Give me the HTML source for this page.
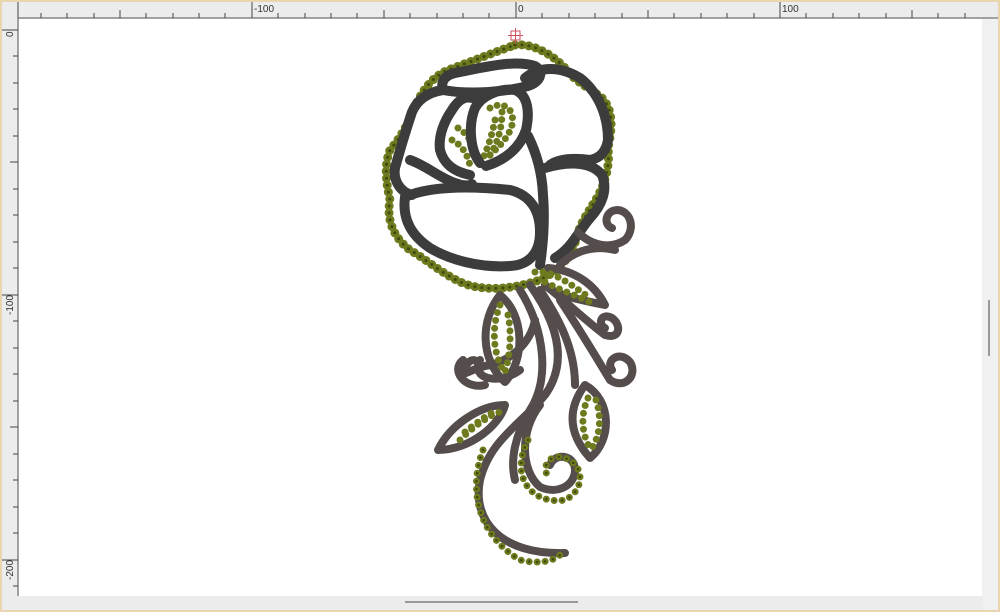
<!DOCTYPE html>
<html><head><meta charset="utf-8"><style>
html,body{margin:0;padding:0;width:1000px;height:612px;overflow:hidden;background:#f3e3c3}
svg{display:block}
</style></head><body>
<svg width="1000" height="612" viewBox="0 0 1000 612" xmlns="http://www.w3.org/2000/svg" font-family="Liberation Sans, sans-serif">
<rect x="0" y="0" width="1000" height="612" fill="#e9d6ae"/>
<rect x="2" y="2" width="996" height="608" fill="#f0f0f0"/>
<rect x="19" y="19" width="963" height="577" fill="#fff"/>
<rect x="2" y="2" width="996" height="16" fill="#ececec"/>
<line x1="2" y1="18" x2="998" y2="18" stroke="#555"/>
<rect x="2" y="2" width="16" height="608" fill="#ececec"/>
<line x1="18" y1="18" x2="18" y2="596" stroke="#555"/>
<g stroke="#444" stroke-width="1">
<line x1="18" y1="2" x2="18" y2="18"/>
<line x1="252" y1="2" x2="252" y2="18"/><line x1="516" y1="2" x2="516" y2="18"/><line x1="780" y1="2" x2="780" y2="18"/>
<line x1="41" y1="13" x2="41" y2="18"/><line x1="67" y1="13" x2="67" y2="18"/><line x1="94" y1="13" x2="94" y2="18"/><line x1="120" y1="10" x2="120" y2="18"/><line x1="146" y1="13" x2="146" y2="18"/><line x1="173" y1="13" x2="173" y2="18"/><line x1="199" y1="13" x2="199" y2="18"/><line x1="225" y1="13" x2="225" y2="18"/>
<line x1="278" y1="13" x2="278" y2="18"/><line x1="305" y1="13" x2="305" y2="18"/><line x1="331" y1="13" x2="331" y2="18"/><line x1="357" y1="13" x2="357" y2="18"/><line x1="384" y1="10" x2="384" y2="18"/><line x1="410" y1="13" x2="410" y2="18"/><line x1="437" y1="13" x2="437" y2="18"/><line x1="463" y1="13" x2="463" y2="18"/><line x1="489" y1="13" x2="489" y2="18"/>
<line x1="542" y1="13" x2="542" y2="18"/><line x1="569" y1="13" x2="569" y2="18"/><line x1="595" y1="13" x2="595" y2="18"/><line x1="622" y1="13" x2="622" y2="18"/><line x1="648" y1="10" x2="648" y2="18"/><line x1="674" y1="13" x2="674" y2="18"/><line x1="701" y1="13" x2="701" y2="18"/><line x1="727" y1="13" x2="727" y2="18"/><line x1="754" y1="13" x2="754" y2="18"/>
<line x1="806" y1="13" x2="806" y2="18"/><line x1="833" y1="13" x2="833" y2="18"/><line x1="859" y1="13" x2="859" y2="18"/><line x1="886" y1="13" x2="886" y2="18"/><line x1="912" y1="10" x2="912" y2="18"/><line x1="938" y1="13" x2="938" y2="18"/><line x1="965" y1="13" x2="965" y2="18"/>
<line x1="2" y1="30" x2="18" y2="30"/><line x1="2" y1="295" x2="18" y2="295"/><line x1="2" y1="560" x2="18" y2="560"/>
<line x1="13" y1="56" x2="18" y2="56"/><line x1="13" y1="83" x2="18" y2="83"/><line x1="13" y1="109" x2="18" y2="109"/><line x1="13" y1="136" x2="18" y2="136"/><line x1="10" y1="162" x2="18" y2="162"/><line x1="13" y1="189" x2="18" y2="189"/><line x1="13" y1="215" x2="18" y2="215"/><line x1="13" y1="242" x2="18" y2="242"/><line x1="13" y1="268" x2="18" y2="268"/>
<line x1="13" y1="321" x2="18" y2="321"/><line x1="13" y1="348" x2="18" y2="348"/><line x1="13" y1="374" x2="18" y2="374"/><line x1="13" y1="401" x2="18" y2="401"/><line x1="10" y1="427" x2="18" y2="427"/><line x1="13" y1="454" x2="18" y2="454"/><line x1="13" y1="480" x2="18" y2="480"/><line x1="13" y1="507" x2="18" y2="507"/><line x1="13" y1="533" x2="18" y2="533"/><line x1="13" y1="586" x2="18" y2="586"/>
</g>
<g font-size="10" fill="#333">
<text x="254" y="12">-100</text><text x="518" y="12">0</text><text x="782" y="12">100</text>
<text transform="translate(13,37) rotate(-90)">0</text>
<text transform="translate(13,315) rotate(-90)">-100</text>
<text transform="translate(13,580) rotate(-90)">-200</text>
</g>
<rect x="983" y="19" width="15" height="577" fill="#f0f0f0"/>
<line x1="989" y1="300" x2="989" y2="356" stroke="#999" stroke-width="2"/>
<rect x="2" y="596" width="981" height="14" fill="#ececec"/>
<line x1="405" y1="602" x2="578" y2="602" stroke="#999" stroke-width="2"/>
<g fill="none" stroke-linecap="round" stroke-linejoin="round">
<!-- green sequin outline of rose -->
<g id="ol">
<path d="M515 45 C530 43 550 52 565 68 C575 82 590 88 602 98 C614 110 612 130 608 148 C610 165 606 180 598 196 C590 210 580 222 576 240 C570 258 560 270 540 280 C515 288 490 292 465 284 C445 276 430 262 410 250 C394 238 386 220 390 200 C386 182 384 165 390 150 C400 138 408 125 414 108 C422 92 430 78 448 70 C470 62 495 52 515 45 Z" stroke="#6f7a1e" stroke-width="9" stroke-dasharray="0 7"/>
</g>
<path d="M515 45 C530 43 550 52 565 68 C575 82 590 88 602 98 C614 110 612 130 608 148 C610 165 606 180 598 196 C590 210 580 222 576 240 C570 258 560 270 540 280 C515 288 490 292 465 284 C445 276 430 262 410 250 C394 238 386 220 390 200 C386 182 384 165 390 150 C400 138 408 125 414 108 C422 92 430 78 448 70 C470 62 495 52 515 45 Z" stroke="#3b4a10" stroke-width="3" stroke-dasharray="0 7"/>
<!-- inner sequin fills -->
<g stroke="#6f7a1e" stroke-width="7" stroke-dasharray="0 7.5">
<path d="M490 108 C505 100 515 110 512 125 C508 140 495 150 485 160"/>
<path d="M495 120 C492 135 488 148 482 160"/>
<path d="M502 112 C502 128 498 142 490 155"/>
<path d="M458 128 C470 135 476 150 478 162"/>
<path d="M452 140 C462 145 468 155 470 166"/>
</g>
<!-- rose petals dark -->
<g stroke="#3d3c3c" stroke-width="10">
<path d="M443 90 C440 80 446 74 460 72 C490 66 515 60 535 66 C545 72 540 82 528 86 C505 92 470 95 443 90 Z"/>
<path d="M525 78 C540 66 560 66 580 78 C598 92 608 115 608 140 C606 152 600 158 590 160 C575 158 560 158 550 165"/>
<path d="M545 168 C565 162 590 160 602 175 C608 190 602 205 590 218 C578 232 572 248 555 258"/>
<path d="M443 90 C430 92 418 98 412 112 C406 130 400 150 395 168 C393 180 400 192 412 195"/>
<path d="M410 160 C425 165 440 178 455 183 C462 186 470 186 472 184"/>
<path d="M470 175 C455 172 444 165 440 150 C438 135 445 120 452 110 C458 100 465 96 472 98"/>
<path d="M480 163 C470 150 468 125 475 108 C482 95 500 88 515 90 C528 95 530 112 526 130 C520 148 505 160 486 166"/>
<path d="M528 136 C535 150 542 170 543 195 C545 220 543 245 540 265"/>
<path d="M405 197 C430 186 470 186 510 190 C530 195 540 210 540 232 C540 252 530 265 510 266 C480 268 450 260 430 248 C412 236 402 220 405 197 Z"/>
</g>
<!-- stems -->
<g stroke="#544d4b" stroke-width="8">
<path d="M530 285 C555 320 570 360 545 395 C520 425 490 440 480 480 C472 520 500 555 565 553"/>
<path d="M520 290 C545 330 550 380 530 410 C515 435 510 460 515 480"/>
<path d="M540 290 C560 320 575 350 575 385"/>
<path d="M545 285 C570 305 585 320 605 335 C620 340 622 325 612 318 C600 312 598 325 605 328"/>
<path d="M560 300 C580 330 595 355 610 380 C625 390 638 375 630 362 C620 350 605 360 612 370"/>
<path d="M535 320 C530 345 510 360 490 365 C470 368 460 380 465 368 C470 355 482 360 478 370"/>
<path d="M578 232 C590 245 610 250 625 240 C635 230 632 212 618 210 C605 210 603 225 612 228"/>
<path d="M560 265 C575 250 595 245 615 250"/>
<path d="M480 360 C470 380 500 385 520 370 M463 360 C450 370 465 390 485 385"/>
<path d="M540 405 C520 430 520 470 540 487 C558 495 575 485 575 470 C575 455 555 452 550 465"/>
<path d="M548 268 C575 270 595 285 605 305 C580 300 555 295 545 285"/>
<path d="M500 295 C480 320 480 360 505 382 C525 360 525 315 500 295 Z"/>
<path d="M438 450 C450 425 480 405 505 405 C500 425 470 450 438 450 Z"/>
<path d="M585 385 C570 405 565 430 590 458 C612 440 612 400 585 385 Z"/>
</g>
<g stroke="#6f7a1e" stroke-width="7" stroke-dasharray="0 8">
<path d="M500 305 C492 325 492 350 503 370 M508 315 C512 335 510 355 505 372"/>
<path d="M460 440 C475 425 490 415 500 412 M465 432 C480 420 492 412 498 410"/>
<path d="M588 398 C580 415 582 435 590 448 M596 400 C602 418 600 435 592 448"/>
<path d="M535 272 C550 270 565 280 590 298 M545 282 C560 290 575 295 590 302"/>
<path d="M483 450 C468 490 478 535 520 560 C540 565 555 560 560 555"/>
<path d="M528 440 C508 480 535 505 565 500 C585 490 585 465 565 458 C548 452 540 470 550 478"/>
</g>
<g stroke="#3b4a10" stroke-width="2.5" stroke-dasharray="0 8">
<path d="M483 450 C468 490 478 535 520 560 C540 565 555 560 560 555"/>
<path d="M528 440 C508 480 535 505 565 500 C585 490 585 465 565 458 C548 452 540 470 550 478"/>
</g>
</g>
<g stroke="#d05060" stroke-width="1" fill="none"><rect x="511" y="31" width="9" height="9"/><line x1="515.5" y1="28" x2="515.5" y2="44"/><line x1="508" y1="35.5" x2="523" y2="35.5"/></g>
</svg>
</body></html>
